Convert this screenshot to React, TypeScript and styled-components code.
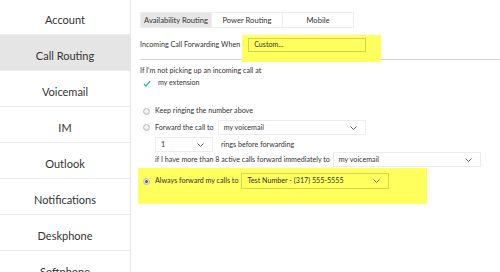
import React from "react";
import styled, { createGlobalStyle } from "styled-components";

const Global = createGlobalStyle`
  html, body { margin: 0; padding: 0; background: #fff; }
  body { font-family: "Lato", "Open Sans", sans-serif; color: #333; }
  * { box-sizing: border-box; }
`;

const Page = styled.div`
  display: flex;
  width: 500px;
  height: 272px;
  overflow: hidden;
  background: #fff;
`;

const Sidebar = styled.nav`
  width: 131px;
  flex: none;
  border-right: 1px solid #e6e6e6;
  display: flex;
  flex-direction: column;
  margin-top: -1px;
`;

const NavItem = styled.div<{ $active?: boolean }>`
  height: 36px;
  flex: none;
  padding-top: 13px;
  line-height: 16px;
  font-size: 11px;
  text-align: center;
  color: #333;
  border-bottom: 1px solid #ededed;
  background: ${(p) => (p.$active ? "#e5e5e5" : "#fff")};
`;

const Main = styled.main`
  flex: 1;
  padding: 12px 0 0 9px;
  font-size: 7.15px;
  line-height: 12px;
  display: flex;
  flex-direction: column;
`;

const Tabs = styled.div`
  display: flex;
  height: 16px;
  font-size: 7.6px;
`;

const Tab = styled.div<{ $active?: boolean }>`
  width: 72px;
  margin-right: -1px;
  border: 1px solid #ededed;
  background: ${(p) => (p.$active ? "#e6e6e6" : "#fff")};
  display: flex;
  align-items: center;
  justify-content: center;
  white-space: nowrap;
  color: #333;
`;

const Row = styled.div<{ $top?: number; $indent?: number; $h?: number }>`
  display: flex;
  align-items: center;
  height: ${(p) => p.$h ?? 12}px;
  margin-top: ${(p) => p.$top ?? 0}px;
  padding-left: ${(p) => p.$indent ?? 0}px;
  white-space: nowrap;
`;

const Marker = styled.div`
  position: relative;
  z-index: 1;
  background: #ffff5e;
  padding: 3px 15px 10px 6px;
  margin: -3px -15px -10px 2px;
`;

const Divider = styled.div`
  height: 1px;
  background: #d6d6d6;
  margin-top: 7px;
`;

const Select = styled.div<{ $w: number; $h?: number; $marked?: boolean; $gap?: number }>`
  width: ${(p) => p.$w}px;
  height: ${(p) => p.$h ?? 15}px;
  margin-left: ${(p) => p.$gap ?? 0}px;
  flex: none;
  display: flex;
  align-items: center;
  justify-content: space-between;
  padding: 0 8px 0 5px;
  border: 1px solid ${(p) => (p.$marked ? "#d4d44c" : "#ececec")};
  background: ${(p) => (p.$marked ? "transparent" : "#fff")};
  color: #333;
`;

const Radio = styled.span<{ $checked?: boolean }>`
  width: 7px;
  height: 7px;
  flex: none;
  border-radius: 50%;
  border: 1px solid #b9b9b9;
  background: radial-gradient(circle at 50% 40%, #fafafa, #dcdcdc);
  display: flex;
  align-items: center;
  justify-content: center;
  margin-right: 5px;
  &::after {
    content: "";
    width: 3px;
    height: 3px;
    border-radius: 50%;
    background: ${(p) => (p.$checked ? "#555" : "transparent")};
  }
`;

const CheckMark = styled.svg`
  flex: none;
  margin-right: 7px;
`;

const Gap = styled.span<{ $w: number }>`
  display: inline-block;
  width: ${(p) => p.$w}px;
  flex: none;
`;

const Highlight = styled.div`
  margin-top: 1px;
  margin-left: -2px;
  width: 289px;
  padding: 5px 0 15px 5px;
  background: #ffff5e;
`;

const Chevron = () => (
  <svg width="7" height="4" viewBox="0 0 7 4">
    <polyline points="0.5,0.5 3.5,3.5 6.5,0.5" fill="none" stroke="#666" strokeWidth="1" />
  </svg>
);

type DropdownProps = {
  label: string;
  $w: number;
  $h?: number;
  $marked?: boolean;
  $gap?: number;
  noArrow?: boolean;
};

const Dropdown = ({ label, noArrow, ...rest }: DropdownProps) => (
  <Select {...rest}>
    <span>{label}</span>
    {!noArrow && <Chevron />}
  </Select>
);

const nav = ["Account", "Call Routing", "Voicemail", "IM", "Outlook", "Notifications", "Deskphone", "Softphone"];

export default function App() {
  return (
    <>
      <Global />
      <Page>
        <Sidebar>
          {nav.map((n) => (
            <NavItem key={n} $active={n === "Call Routing"}>
              {n}
            </NavItem>
          ))}
        </Sidebar>
        <Main>
          <Tabs>
            <Tab $active>Availability Routing</Tab>
            <Tab>Power Routing</Tab>
            <Tab>Mobile</Tab>
          </Tabs>
          <Row $top={10} $h={14}>
            <span>Incoming Call Forwarding When</span>
            <Marker>
              <Dropdown label="Custom..." $w={118} $h={14} $marked noArrow />
            </Marker>
          </Row>
          <Divider />
          <Row $top={5}>If I'm not picking up an incoming call at</Row>
          <Row $indent={3}>
            <CheckMark width="8" height="7" viewBox="0 0 8 7">
              <polyline points="1,4 3,6 7,1" fill="none" stroke="#2ec492" strokeWidth="1.4" />
            </CheckMark>
            <span>my extension</span>
          </Row>
          <Row $top={16} $indent={3}>
            <Radio />
            <span>Keep ringing the number above</span>
          </Row>
          <Row $top={3} $indent={3} $h={15}>
            <Radio />
            <span>Forward the call to</span>
            <Dropdown label="my voicemail" $w={148} $gap={4} />
          </Row>
          <Row $top={2} $indent={15} $h={15}>
            <Dropdown label="1" $w={58} />
            <Gap $w={8} />
            <span>rings before forwarding</span>
          </Row>
          <Row $indent={15} $h={15}>
            <span>if I have more than 8 active calls forward immediately to</span>
            <Dropdown label="my voicemail" $w={148} $gap={3} />
          </Row>
          <Highlight>
            <Row $h={16}>
              <Radio $checked />
              <span>Always forward my calls to</span>
              <Dropdown label="Test Number - (317) 555-5555" $w={148} $h={16} $gap={3} $marked />
            </Row>
          </Highlight>
        </Main>
      </Page>
    </>
  );
}
